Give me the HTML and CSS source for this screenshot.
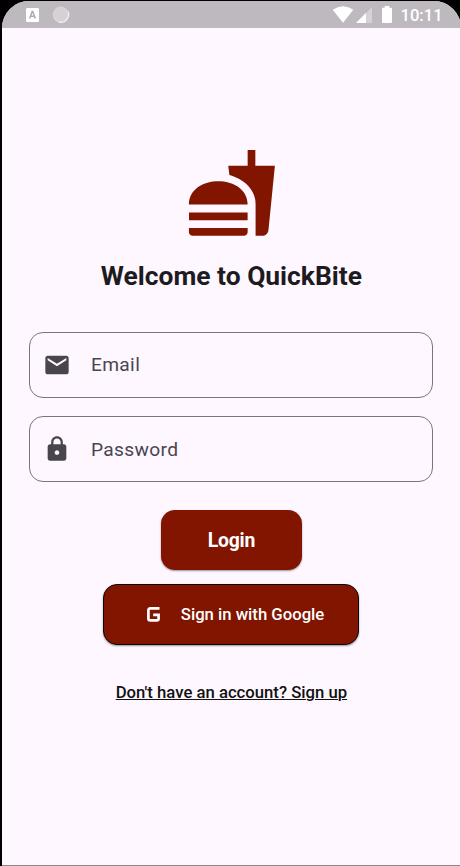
FILE: index.html
```html
<!DOCTYPE html>
<html lang="en">
<head>
<meta charset="utf-8">
<title>QuickBite</title>
<link rel="stylesheet" href="styles.css">
</head>
<body>
<div class="screen">
  <header class="status">
    <svg class="status-app" width="13" height="14" viewBox="0 0 13 14"><rect width="13" height="14" rx="1.2" fill="#fff"/><path d="M3.7 10.5 6.2 3.5h.6L9.3 10.5M4.6 8.2h3.8" fill="none" stroke="#b0aab0" stroke-width="1.5"/></svg>
    <svg class="status-sync" width="18" height="18" viewBox="0 0 18 18"><circle cx="9" cy="9" r="8" fill="#d5d1d5"/><path d="M16 5.5A7.8 7.8 0 0 1 7 16.2" fill="none" stroke="#f4f2f4" stroke-width="1.2"/><circle cx="8.5" cy="8.5" r="7.3" fill="none" stroke="#e5e2e5" stroke-width="1" stroke-dasharray="1.5 1"/></svg>
    <svg class="status-wifi" width="22" height="17" viewBox="0 0 22 17"><path d="M.7 3.8Q11-3.2 21.3 3.8L11 16.7Z" fill="#fff"/></svg>
    <svg class="status-signal" width="16" height="16" viewBox="0 0 16 16"><path d="M0 16 16 0V16Z" fill="#d6d1d6"/><path d="M0 16 10 6V16Z" fill="#fff"/></svg>
    <svg class="status-battery" width="10" height="17" viewBox="0 0 10 17"><path d="M2.7 0h4.6v1.7H9q1 0 1 1V16q0 1-1 1H1q-1 0-1-1V2.7q0-1 1-1h1.7Z" fill="#fff"/></svg>
    <span class="clock">10:11</span>
  </header>
  <main class="content">
    <svg class="logo" viewBox="0 0 24 24"><path d="M18.06 22.99h1.66c.84 0 1.53-.64 1.63-1.46L23 5.05h-5V1h-1.97v4.05h-4.97l.3 2.34c1.71.47 3.31 1.32 4.27 2.26 1.44 1.42 2.43 2.89 2.43 5.29v8.05zM1 21.99V21h15.03v.99c0 .55-.45 1-1.01 1H2.01c-.56 0-1.01-.45-1.01-1zm15.03-7c0-8-15.03-8-15.03 0h15.03zM1.02 17h15v2h-15z"/></svg>
    <h1 class="title">Welcome to QuickBite</h1>
    <div class="field">
      <svg class="field-icon" viewBox="0 0 24 24"><path d="M20 4H4c-1.1 0-1.99.9-1.99 2L2 18c0 1.1.9 2 2 2h16c1.1 0 2-.9 2-2V6c0-1.1-.9-2-2-2zm0 4-8 5-8-5V6l8 5 8-5v2z"/></svg>
      <span>Email</span>
    </div>
    <div class="field">
      <svg class="field-icon" viewBox="0 0 24 24"><path d="M18 8h-1V6c0-2.76-2.24-5-5-5S7 3.24 7 6v2H6c-1.1 0-2 .9-2 2v10c0 1.1.9 2 2 2h12c1.1 0 2-.9 2-2V10c0-1.1-.9-2-2-2zm-6 9c-1.1 0-2-.9-2-2s.9-2 2-2 2 .9 2 2-.9 2-2 2zm3.1-9H8.9V6c0-1.71 1.39-3.1 3.1-3.1s3.1 1.39 3.1 3.1v2z"/></svg>
      <span>Password</span>
    </div>
    <button class="login" type="button">Login</button>
    <button class="google" type="button">
      <svg class="google-icon" width="13" height="15" viewBox="0 0 13 15"><path d="M12.5 1.4H3.3Q1.4 1.4 1.4 3.3v8.2q0 1.9 1.9 1.9h6.4q1.9 0 1.9-1.9V7.8H6.2" fill="none" stroke="#fff" stroke-width="2.7"/></svg>
      <span>Sign in with Google</span>
    </button>
    <a class="signup">Don't have an account? Sign up</a>
  </main>
</div>
</body>
</html>
```
FILE: styles.css
```css
* { box-sizing: border-box; }
body {
  margin: 0;
  background: #000;
  font-family: Roboto, sans-serif;
  overflow: hidden;
}
.screen {
  width: 459px;
  height: 865px;
  margin: 1px 0 0 2px;
  background: #fef7ff;
  border-radius: 27px 27px 0 0;
  border-bottom: 1px solid #8c888c;
  overflow: hidden;
}
.status {
  display: flex;
  align-items: center;
  height: 27px;
  padding-left: 24px;
  background: #beb9bf;
}
.status-sync { margin-left: 12.5px; }
.status-wifi { margin-left: 262.5px; }
.status-signal { margin-left: 2px; }
.status-battery { margin-left: 10px; }
.clock {
  margin: 2px 0 0 8.5px;
  font-size: 16.6px;
  font-weight: 500;
  color: #fff;
}
.content {
  display: flex;
  flex-direction: column;
  align-items: center;
  padding: 117.5px 27.6px 0 27.4px;
}
.logo {
  width: 93.8px;
  height: 93.8px;
  fill: #811500;
}
.title {
  margin: 18.7px 0 38px;
  font-size: 26.4px;
  line-height: 36px;
  font-weight: 700;
  white-space: nowrap;
  color: #1d1b20;
}
.field {
  display: flex;
  align-items: center;
  width: 404px;
  height: 66px;
  margin-bottom: 18.5px;
  padding-left: 13px;
  border: 1px solid #79747e;
  border-radius: 14px;
  font-size: 19.2px;
  letter-spacing: .35px;
  color: #49454f;
}
.field-icon {
  width: 28px;
  height: 28px;
  margin-right: 19.5px;
  fill: #49454f;
}
button {
  font-family: inherit;
  color: #fff;
  background: #811500;
  padding: 0;
}
.login {
  width: 141px;
  height: 60px;
  margin-top: 9.5px;
  border: 0;
  border-radius: 14px;
  box-shadow: 0 1px 2px rgba(0, 0, 0, .4);
  font-size: 19.4px;
  font-weight: 700;
  letter-spacing: -.2px;
}
.google {
  display: flex;
  align-items: center;
  width: 256px;
  height: 61px;
  margin-top: 14px;
  padding-left: 43px;
  border: 1px solid #100806;
  border-radius: 14px;
  box-shadow: 0 1px 2px rgba(0, 0, 0, .4);
  font-size: 16.7px;
  font-weight: 500;
  white-space: nowrap;
}
.google-icon { margin-right: 20.4px; }
.signup {
  margin-top: 37.6px;
  font-size: 16.7px;
  line-height: 20px;
  font-weight: 500;
  color: #111;
  text-decoration: underline;
  text-decoration-thickness: 1px;
  text-underline-offset: 1px;
  white-space: nowrap;
}
```
